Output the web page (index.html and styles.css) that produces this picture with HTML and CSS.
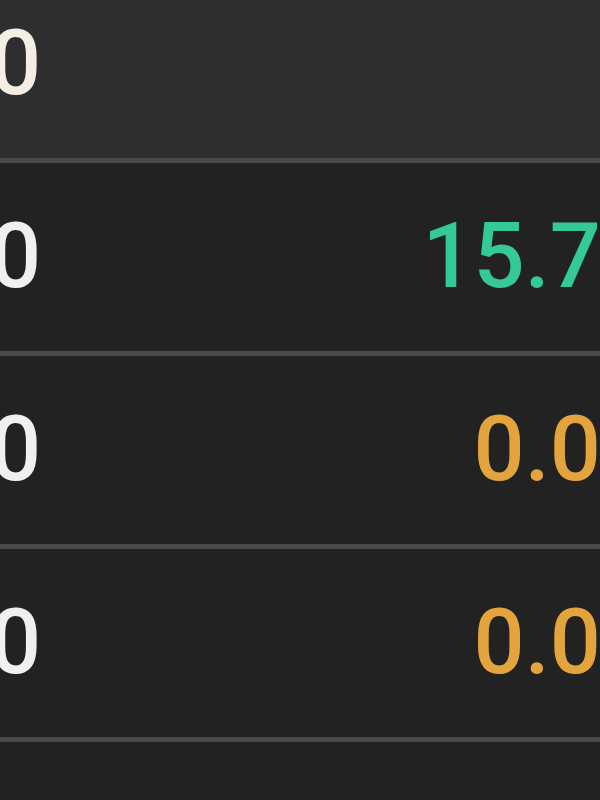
FILE: index.html
```html
<!DOCTYPE html>
<html lang="en">
<head>
    <meta charset="UTF-8">
    <meta name="viewport" content="width=device-width, initial-scale=1.0">
    <title>Rates</title>
    <link rel="stylesheet" href="styles.css">
</head>
<body>

    <div class="table">
        <div class="row head">
            <span class="cell">0</span>
            <span class="cell value"></span>
        </div>
        <div class="row">
            <span class="cell">0</span>
            <span class="cell value up">15.70</span>
        </div>
        <div class="row">
            <span class="cell">0</span>
            <span class="cell value flat">0.00</span>
        </div>
        <div class="row">
            <span class="cell">0</span>
            <span class="cell value flat">0.00</span>
        </div>
        <div class="row"></div>
    </div>

</body>
</html>
```

FILE: styles.css
```css
body {
    margin: 0;
    background-color: #222222;
    color: #f0f0f0;
    font-family: Roboto, "Liberation Sans", sans-serif;
    overflow: hidden;
}
.table {
    margin: -30px -52px 0 -10px;
}
.row {
    display: flex;
    justify-content: space-between;
    align-items: center;
    height: 188px;
    border-bottom: 5px solid #4a4a4a;
    font-size: 90px;
    font-weight: 500;
    line-height: 1;
}
.row.head {
    background-color: #2e2e2e;
}
.row.head .cell {
    color: #f3ede2;
}
.value {
    text-align: right;
}
.up {
    color: #34c996;
}
.flat {
    color: #e3a43e;
}
```
